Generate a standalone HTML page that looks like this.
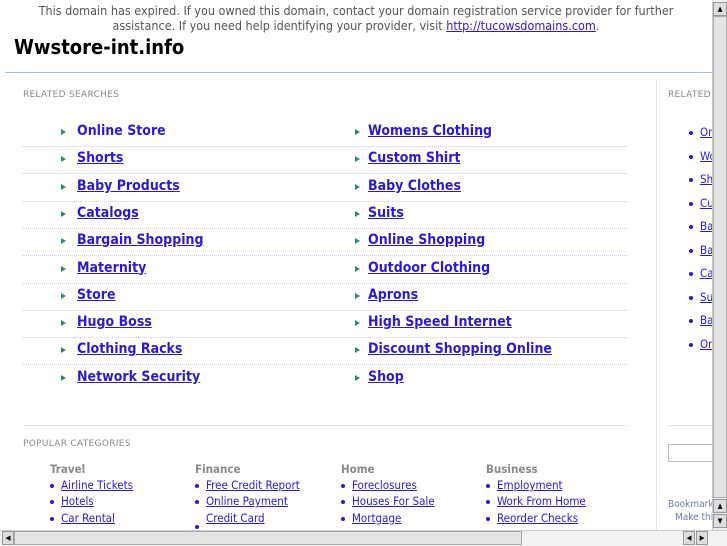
<!DOCTYPE html>
<html><head><meta charset="utf-8"><style>
body{margin:0;width:727px;height:545px;overflow:hidden;background:#fff;font-family:"DejaVu Sans Condensed","DejaVu Sans","Liberation Sans",sans-serif;position:relative}
.a{position:absolute;white-space:nowrap}
a{color:#2a1ad0;text-decoration:underline}
.top{left:0;width:712px;top:3px;text-align:center;font-size:12.5px;color:#555;line-height:15px}
.title{left:14px;top:35px;font-size:20px;font-weight:bold;color:#000}
.hr{left:5px;top:72px;width:707px;height:1px;background:#a8bcd8}
.small{font-family:"DejaVu Sans",sans-serif;font-size:9px;color:#888;letter-spacing:.3px}
.rs{font-size:14px;font-weight:bold}
.arr{position:absolute;width:0;height:0;border-left:5px solid #2a8a7a;border-top:3px solid transparent;border-bottom:3px solid transparent}
.dot{position:absolute;left:23px;width:604px;border-top:1px dotted #c8c8e8;height:0}
.cat{font-size:11.5px;font-weight:bold;color:#888}
.pl{font-size:11.5px}
.b{position:absolute;width:4px;height:4px;border-radius:2px;background:#2a1ad0}
</style></head><body>
<div class="a top">This domain has expired. If you owned this domain, contact your domain registration service provider for further<br>assistance. If you need help identifying your provider, visit <a href="#">http://tucowsdomains.com</a>.</div>
<div class="a title">Wwstore-int.info</div>
<div class="a hr"></div>
<div class="a small" style="left:23px;top:90px">RELATED SEARCHES</div>
<div class="a small" style="left:668px;top:90px">RELATED</div>
<div class="a" style="left:656px;top:80px;width:1px;height:450px;background:#dde4f0"></div>
<div class="a" style="left:23px;top:425px;width:604px;height:1px;background:#dde4f0"></div>
<div class="a" style="left:668px;top:425px;width:44px;height:1px;background:#dde4f0"></div>
<div id="rs"></div>
<div class="a small" style="left:23px;top:439px">POPULAR CATEGORIES</div>
<div class="a" style="left:668px;top:444px;width:44px;height:16px;border:1px solid #bbb;border-right:none"></div>
<div class="a" style="left:668px;top:499px;font-size:10px;color:#6a7ab0">Bookmark</div>
<div class="a" style="left:675px;top:512px;font-size:10px;color:#6a7ab0">Make thi</div>
<script>
var L=["Online Store","Shorts","Baby Products","Catalogs","Bargain Shopping","Maternity","Store","Hugo Boss","Clothing Racks","Network Security"];
var R=["Womens Clothing","Custom Shirt","Baby Clothes","Suits","Online Shopping","Outdoor Clothing","Aprons","High Speed Internet","Discount Shopping Online","Shop"];
var h="";
for(var i=0;i<10;i++){var y=123+i*27.3;
h+='<div class="arr" style="left:61px;top:'+(y+6)+'px"></div><div class="a rs" style="left:77px;top:'+y+'px">'+(i==0?'<span style="color:#2a1ad0">'+L[i]+'</span>':'<a href="#">'+L[i]+'</a>')+'</div>';
h+='<div class="arr" style="left:355px;top:'+(y+6)+'px"></div><div class="a rs" style="left:368px;top:'+y+'px"><a href="#">'+R[i]+'</a></div>';
if(i<9)h+='<div class="dot" style="top:'+(y+23)+'px"></div>';}
var s=["On","Wo","Sh","Cu","Ba","Ba","Ca","Su","Ba","On"];
for(var i=0;i<10;i++){var y=125+i*23.5;h+='<div class="b" style="left:689px;top:'+(y+6)+'px"></div><div class="a pl" style="left:700px;top:'+y+'px"><a href="#">'+s[i]+'</a></div>';}
var C=[["Travel",50,["Airline Tickets","Hotels","Car Rental"]],["Finance",195,["Free Credit Report","Online Payment","Credit Card"]],["Home",341,["Foreclosures","Houses For Sale","Mortgage"]],["Business",486,["Employment","Work From Home","Reorder Checks"]]];
C.forEach(function(c){h+='<div class="a cat" style="left:'+c[1]+'px;top:462px">'+c[0]+'</div>';
c[2].forEach(function(t,j){var y=478+j*16.3;if(!(c[0]=="Finance"&&j==2))h+='<div class="b" style="left:'+c[1]+'px;top:'+(y+6)+'px"></div>';h+='<div class="a pl" style="left:'+(c[1]+11)+'px;top:'+y+'px"><a href="#">'+t+'</a></div>';});});
h+='<div class="b" style="left:195px;top:525px"></div>';
document.getElementById("rs").innerHTML=h;
</script>
<div class="a" style="left:712px;top:0;width:15px;height:530px;background:#eee;border-left:1px solid #ccc"></div>
<div class="a" style="left:713px;top:2px;width:12px;height:12px;background:#ddd;border:1px solid #999;font-size:7px;text-align:center;line-height:12px">▲</div>
<div class="a" style="left:713px;top:16px;width:12px;height:480px;background:#e4e4e4;border:1px solid #aaa"></div>
<div class="a" style="left:713px;top:499px;width:12px;height:12px;background:#ddd;border:1px solid #999;font-size:7px;text-align:center;line-height:12px">▲</div>
<div class="a" style="left:713px;top:514px;width:12px;height:12px;background:#ddd;border:1px solid #999;font-size:7px;text-align:center;line-height:12px">▼</div>
<div class="a" style="left:0;top:530px;width:727px;height:15px;background:#f2f2f2;border-top:1px solid #ccc"></div>
<div class="a" style="left:2px;top:531px;width:10px;height:12px;font-size:7px;line-height:12px;text-align:center;border:1px solid #999;background:#ddd">◀</div>
<div class="a" style="left:14px;top:531px;width:506px;height:12px;background:#e4e4e4;border:1px solid #aaa"></div>
<div class="a" style="left:683px;top:531px;width:10px;height:12px;font-size:7px;line-height:12px;text-align:center;border:1px solid #999;background:#ddd">◀</div>
<div class="a" style="left:696px;top:531px;width:10px;height:12px;font-size:7px;line-height:12px;text-align:center;border:1px solid #999;background:#ddd">▶</div>
</body></html>
